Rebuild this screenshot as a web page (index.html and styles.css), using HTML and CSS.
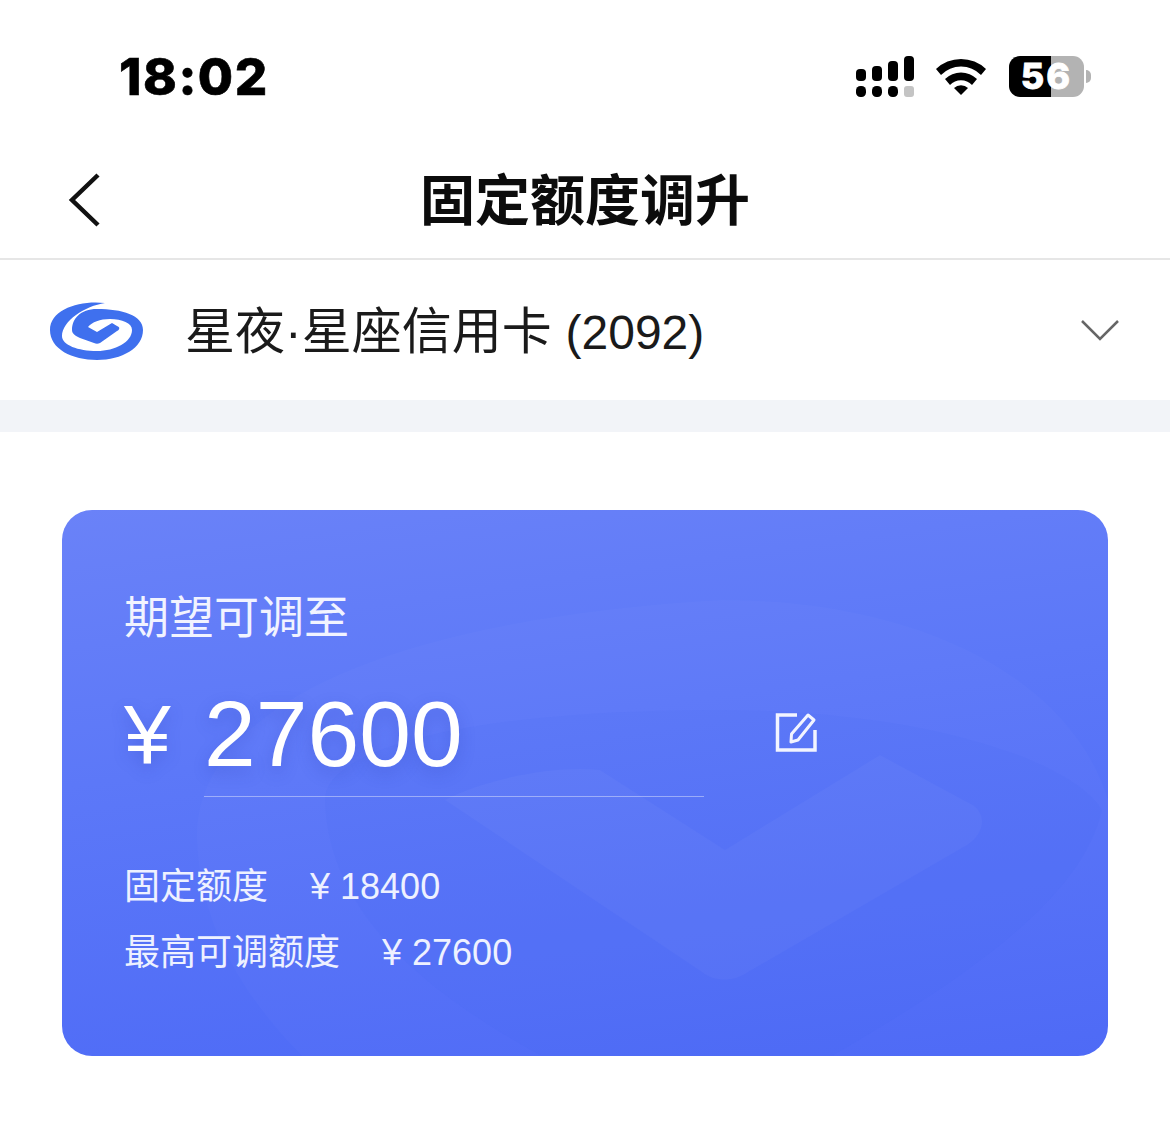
FILE: index.html
```html
<!DOCTYPE html>
<html lang="zh-CN">
<head>
<meta charset="utf-8">
<title>固定额度调升</title>
<link rel="stylesheet" href="styles.css">
</head>
<body>
<div class="page">
  <header class="status">
    <span class="time">18:02</span>
    <div class="status-icons">
      <svg class="signal" width="60" height="44" viewBox="0 0 60 44">
        <rect x="0" y="14" width="10" height="12" rx="4"/>
        <rect x="16" y="11" width="10" height="15" rx="4"/>
        <rect x="32" y="6" width="10" height="20" rx="4"/>
        <rect x="48" y="1" width="10" height="25" rx="4"/>
        <rect x="0" y="31" width="10" height="11" rx="4.500"/>
        <rect x="16" y="31" width="10" height="11" rx="4.500"/>
        <rect x="32" y="31" width="10" height="11" rx="4.500"/>
        <rect class="signal-off" x="48" y="31" width="10" height="11" rx="3"/>
      </svg>
      <svg class="wifi" width="52" height="40" viewBox="0 0 52 40">
        <path d="M1 13 A36 36 0 0 1 51 13 L46 19 A28 28 0 0 0 6 19 Z"/>
        <path d="M10 23 A23 23 0 0 1 42 23 L37 29 A15 15 0 0 0 15 29 Z"/>
        <path d="M19 32 A10 10 0 0 1 33 32 L26 39 Z"/>
      </svg>
      <div class="battery">
        <div class="battery-body">
          <span class="battery-num">56</span>
        </div>
        <span class="battery-cap"></span>
      </div>
    </div>
  </header>

  <nav class="nav">
    <svg class="back" width="34" height="56" viewBox="0 0 34 56">
      <path d="M30 3 L4 28 L30 53" fill="none" stroke="#111" stroke-width="4.500"/>
    </svg>
    <h1 class="nav-title">固定额度调升</h1>
  </nav>

  <section class="card-picker">
    <svg class="bank-logo" width="94" height="60" viewBox="0 0 94 60">
      <path fill="#3f70ee" d="M55 2C30 -1 0 8 0 29C0 48 22 59 47 59C72 59 93 47 93 29C93 14 72 8 47 8C30 8 22 18 22 29C22 33 26 35 30 37L44 42C46 43 48 43 50 42L67 30C70 28 70 26 67 25L62 22L47 31L38 26C42 21 50 18 60 18C72 18 82 22 82 29C82 41 65 50 47 50C28 50 12 44 12 35C12 20 35 5 55 2Z"/>
    </svg>
    <span class="card-name">星夜·星座信用卡 <span class="card-tail">(2092)</span></span>
    <svg class="chevron" width="40" height="24" viewBox="0 0 40 24">
      <path d="M2 3 L20 21 L38 3" fill="none" stroke="#666" stroke-width="2.500"/>
    </svg>
  </section>

  <div class="divider-band"></div>

  <main class="content">
    <section class="quota">
      <!-- faint enlarged brand swirl behind the figures -->
      <svg class="quota-mark" viewBox="0 0 1046 546" preserveAspectRatio="none">
        <path fill="#fff" fill-opacity=".02" d="M135 330C130 210 300 110 660 90C860 90 1010 170 1046 290V546H240C175 480 138 410 135 330Z"/>
        <path fill="#3f5ff0" fill-opacity=".07" d="M263 290C262 240 400 200 660 200C860 200 1010 250 1040 300C1020 390 900 470 770 546H480C340 470 266 390 263 290Z"/>
        <path fill="#fff" fill-opacity=".03" d="M383 290L640 462C652 472 672 472 686 462L905 335C925 322 925 300 905 292L818 245L663 340L538 260C490 255 420 270 383 290Z"/>
      </svg>
      <div class="quota-body">
        <h2 class="quota-label">期望可调至</h2>
        <div class="quota-amount">
          <span class="yen">¥</span>
          <span class="amount-value">27600</span>
          <svg class="edit" width="46" height="46" viewBox="0 0 46 46">
            <path d="M24 5H4.500V40H42V20" fill="none" stroke="#fff" stroke-width="3.500" stroke-opacity=".92"/>
            <path d="M18 32 L18.500 24 L35 5 L41 10 L25 30 Z" fill="none" stroke="#fff" stroke-width="3" stroke-opacity=".92" stroke-linejoin="round"/>
          </svg>
        </div>
        <ul class="quota-facts">
          <li class="fact"><span>固定额度</span><span class="fact-value"><span class="fact-yen">¥</span>18400</span></li>
          <li class="fact"><span>最高可调额度</span><span class="fact-value"><span class="fact-yen">¥</span>27600</span></li>
        </ul>
      </div>
    </section>
  </main>
</div>
</body>
</html>
```
FILE: styles.css
```css
* { box-sizing: border-box; }

html, body {
  margin: 0;
  padding: 0;
  background: #fff;
}

.page {
  width: 1170px;
  height: 1134px;
  overflow: hidden;
  font-family: "Liberation Sans", "Noto Sans CJK SC", sans-serif;
  color: #111;
}

/* status bar */
.status {
  height: 150px;
  display: flex;
  justify-content: space-between;
  align-items: flex-start;
  padding: 47px 79px 0 119px;
}

.time {
  font-family: Inter, "Liberation Sans", sans-serif;
  font-size: 51px;
  line-height: 60px;
  font-weight: 800;
  letter-spacing: 1.500px;
  color: #000;
  -webkit-text-stroke: .6px #000;
}

.status-icons {
  display: flex;
  align-items: flex-start;
  padding-top: 8px;
}

.signal { fill: #000; }
.signal-off { fill: #c4c4c4; }

.wifi {
  fill: #000;
  margin: 1px 0 0 19px;
}

.battery {
  display: flex;
  align-items: center;
  margin: 1px 0 0 22px;
}

.battery-body {
  width: 75px;
  height: 41px;
  border-radius: 11px;
  background: linear-gradient(90deg, #000 0 56%, #b3b3b3 56% 100%);
  display: flex;
  align-items: center;
  justify-content: center;
}

.battery-num {
  font-family: Inter, "Liberation Sans", sans-serif;
  font-size: 36px;
  line-height: 41px;
  font-weight: 800;
  color: #fff;
  -webkit-text-stroke: .8px #fff;
  letter-spacing: 2px;
}

.battery-cap {
  width: 5px;
  height: 13px;
  margin-left: 2px;
  border-radius: 0 6px 6px 0;
  background: #b3b3b3;
}

/* navigation bar */
.nav {
  height: 110px;
  display: flex;
  align-items: center;
  justify-content: center;
  position: relative;
  border-bottom: 2px solid #e6e6e6;
}

.back {
  position: absolute;
  left: 68px;
  top: 22px;
}

.nav-title {
  margin: 0 0 6px;
  font-size: 55px;
  line-height: 64px;
  font-weight: 700;
  color: #0c0c0c;
}

/* selected card row */
.card-picker {
  height: 140px;
  display: flex;
  align-items: center;
  padding: 0 50px;
}

.bank-logo {
  flex: none;
  margin-top: 2px;
}

.card-name {
  margin: 4px 0 0 41px;
  font-size: 50px;
  line-height: 60px;
  color: #1a1a1a;
  flex: 1;
}

.card-tail { font-size: 48px; }

.chevron { flex: none; }

.divider-band {
  height: 32px;
  background: #f2f4f8;
}

/* quota card */
.content {
  padding: 78px 62px 0;
}

.quota {
  position: relative;
  height: 546px;
  border-radius: 30px;
  overflow: hidden;
  background: linear-gradient(172deg, #6a82f8 0%, #5c78f8 40%, #4b68f6 100%);
  color: #fff;
}

.quota-mark {
  position: absolute;
  inset: 0;
  width: 100%;
  height: 100%;
}

.quota-body {
  position: relative;
  padding: 80px 62px 0;
}

.quota-label {
  margin: 0;
  font-size: 45px;
  line-height: 58px;
  font-weight: 400;
  color: #f1f3ff;
}

.quota-amount {
  display: flex;
  align-items: flex-start;
  margin-top: 36px;
  height: 134px;
}

.yen {
  width: 80px;
  flex: none;
  font-size: 84px;
  line-height: 100px;
  text-shadow: 0 6px 16px rgba(40, 60, 180, .25);
}

.amount-value {
  width: 500px;
  flex: none;
  height: 113px;
  font-size: 93px;
  line-height: 100px;
  border-bottom: 1px solid rgba(255, 255, 255, .4);
  text-shadow: 0 6px 16px rgba(40, 60, 180, .25);
}

.edit {
  flex: none;
  margin: 26px 0 0 69px;
}

.quota-facts {
  list-style: none;
  margin: 36px 0 0;
  padding: 0;
}

.fact {
  display: flex;
  gap: 42px;
  font-size: 36px;
  line-height: 66px;
  color: #eef1ff;
}

.fact-yen { margin-right: 10px; }
```
